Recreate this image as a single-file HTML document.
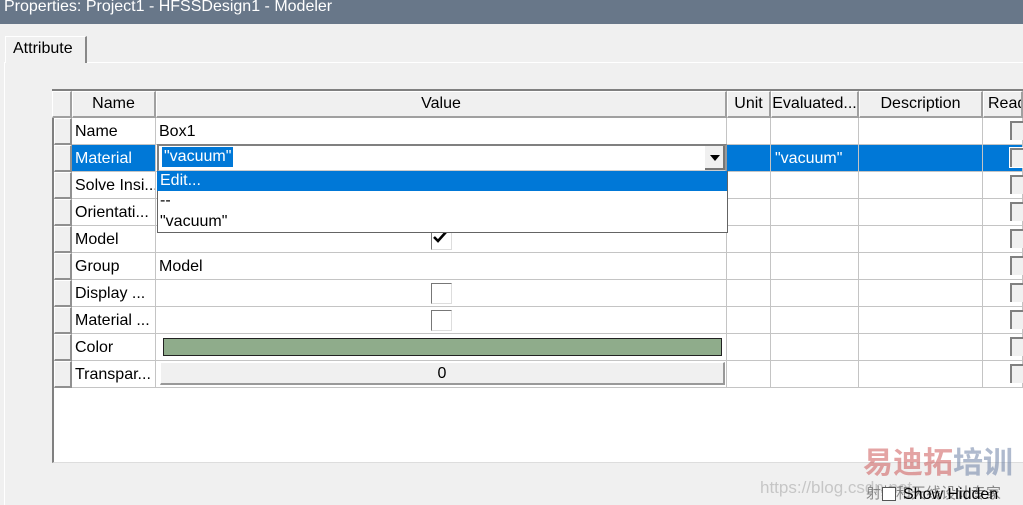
<!DOCTYPE html>
<html style="overflow:hidden;width:1023px;height:505px"><head><meta charset="utf-8"><style>
*{margin:0;padding:0;box-sizing:border-box}
body{width:1023px;height:505px;overflow:hidden;background:#f0f0f0;font-family:"Liberation Sans","Noto Sans CJK SC",sans-serif;font-size:16px;color:#000;position:relative}
.a{position:absolute;white-space:nowrap}
.t{white-space:nowrap;line-height:27px}
</style></head><body>
<div class="a" style="left:0;top:0;width:1023px;height:24px;background:#687789;color:#fff;font-size:16px;line-height:16px;padding:0 0 0 4px"><span style="position:relative;top:-1px">Properties: Project1 - HFSSDesign1 - Modeler</span></div>
<div class="a" style="left:4px;top:62px;width:1019px;height:443px;border-left:1px solid #fff;border-top:1px solid #fff;background:#f0f0f0"></div>
<div class="a" style="left:5px;top:36px;width:82px;height:27px;background:#f0f0f0;border-left:1px solid #fff;border-top:1px solid #fff;border-right:2px solid #888;font-size:16px;line-height:24px;padding-left:7px">Attribute</div>
<div class="a" style="left:52px;top:89px;width:971px;height:374px;background:#fff;border-top:2px solid #808080;border-left:2px solid #808080;border-bottom:1px solid #ddd"></div>
<div id="g"></div>
<div class="a" style="left:760px;top:478px;color:rgba(170,170,170,.6);font-size:17px">https://blog.csdn.net</div>
<div class="a" style="left:863px;top:446px;font-size:30px;font-weight:bold;line-height:36px;color:rgba(205,90,90,.55)">易迪拓<span style="color:rgba(110,130,165,.55)">培训</span></div>
<div class="a" style="left:866px;top:482px;font-size:15px;color:rgba(90,90,90,.7)">射频和天线设计专家</div>
<div class="a" style="left:882px;top:487px;width:14px;height:14px;border:1px solid #555;background:#fff"></div>
<div class="a" style="left:903px;top:486px;font-size:16px">Show Hidden</div>
<script>
var g=document.getElementById('g'),h='';
var cols=[52,72,156,727,771,859,983,1023];
var hd=['','Name','Value','Unit','Evaluated...','Description','Read'];
for(var i=0;i<7;i++){var x=cols[i],w=cols[i+1]-x;
h+='<div class="a t" style="left:'+x+'px;top:91px;width:'+w+'px;height:27px;background:#f0f0f0;border-right:2px solid #a0a0a0;border-bottom:2px solid #a0a0a0;border-top:1px solid #fff;border-left:1px solid #fff;text-align:'+(i==6?'left':'center')+';padding-left:'+(i==6?4:0)+'px;line-height:24px;overflow:hidden">'+hd[i]+'</div>';}
var rn=['Name','Material','Solve Insi...','Orientati...','Model','Group','Display ...','Material ...','Color','Transpar...'];
for(var r=0;r<10;r++){var y=118+r*27,sel=r==1;
h+='<div class="a" style="left:54px;top:'+y+'px;width:18px;height:27px;background:#f0f0f0;border-right:2px solid #909090;border-bottom:2px solid #909090;border-top:1px solid #fff;border-left:1px solid #fff"></div>';
for(var c=1;c<7;c++){var x=cols[c],w=cols[c+1]-x,bg=(sel&&c!=2)?'#0078d7':'#fff';
h+='<div class="a t" style="left:'+x+'px;top:'+y+'px;width:'+w+'px;height:27px;background:'+bg+';border-right:1px solid #c4c4c4;border-bottom:1px solid #c4c4c4;padding-left:3px;overflow:hidden;color:'+(sel?'#fff':'#000')+'">'+(c==1?rn[r]:'')+'</div>';}
h+='<div class="a" style="left:1010px;top:'+(y+3)+'px;width:18px;height:19px;background:#f0f0f0;border-left:2px solid #808080;border-top:2px solid #808080'+(sel?';outline:1px solid #fff':'')+'"></div>';}
g.innerHTML=h;
</script>
<div class="a t" style="left:159px;top:118px">Box1</div>
<div class="a t" style="left:159px;top:253px">Model</div>
<div class="a t" style="left:775px;top:145px;color:#fff">"vacuum"</div>
<div class="a" style="left:431px;top:229px;width:21px;height:21px;border-left:1px solid #777;border-top:1px solid #777;background:#fff;border-right:1px solid #ddd;border-bottom:1px solid #ddd"></div>
<svg class="a" style="left:433px;top:231px" width="14" height="12"><path d="M1 6 L5 10 L13 1" stroke="#000" stroke-width="2.6" fill="none"/></svg>
<div class="a" style="left:431px;top:283px;width:21px;height:21px;border:1px solid #777;border-right-color:#ddd;border-bottom-color:#ddd;background:#fff"></div>
<div class="a" style="left:431px;top:310px;width:21px;height:21px;border:1px solid #777;border-right-color:#ddd;border-bottom-color:#ddd;background:#fff"></div>
<div class="a" style="left:163px;top:338px;width:559px;height:18px;background:#8fac8b;border:1px solid #222"></div>
<div class="a" style="left:160px;top:362px;width:565px;height:23px;background:#f0f0f0;border-top:1px solid #fff;border-left:1px solid #fff;border-right:2px solid #999;border-bottom:2px solid #999;text-align:center;line-height:21px">0</div>
<div class="a" style="left:157px;top:144px;width:570px;height:28px;background:#fff;border:2px solid #808080;border-right-color:#999;border-bottom-color:#ccc"></div>
<div class="a" style="left:162px;top:147px;height:20px;background:#0078d7;color:#fff;line-height:20px;padding:0 2px">"vacuum"</div>
<div class="a" style="left:705px;top:146px;width:20px;height:24px;background:#f0f0f0;border-right:2px solid #777;border-bottom:2px solid #777"></div>
<svg class="a" style="left:709px;top:154px" width="12" height="8"><path d="M1 1 H11 L6 7Z" fill="#000"/></svg>
<div class="a" style="left:157px;top:171px;width:571px;height:62px;background:#fff;border:1px solid #646464;border-top:none"></div>
<div class="a" style="left:157px;top:171px;width:570px;height:20px;background:#0078d7;color:#fff;line-height:20px;padding-left:3px">Edit...</div>
<div class="a" style="left:160px;top:192px;line-height:18px">--</div>
<div class="a" style="left:160px;top:213px;line-height:18px">"vacuum"</div>
</body></html>
